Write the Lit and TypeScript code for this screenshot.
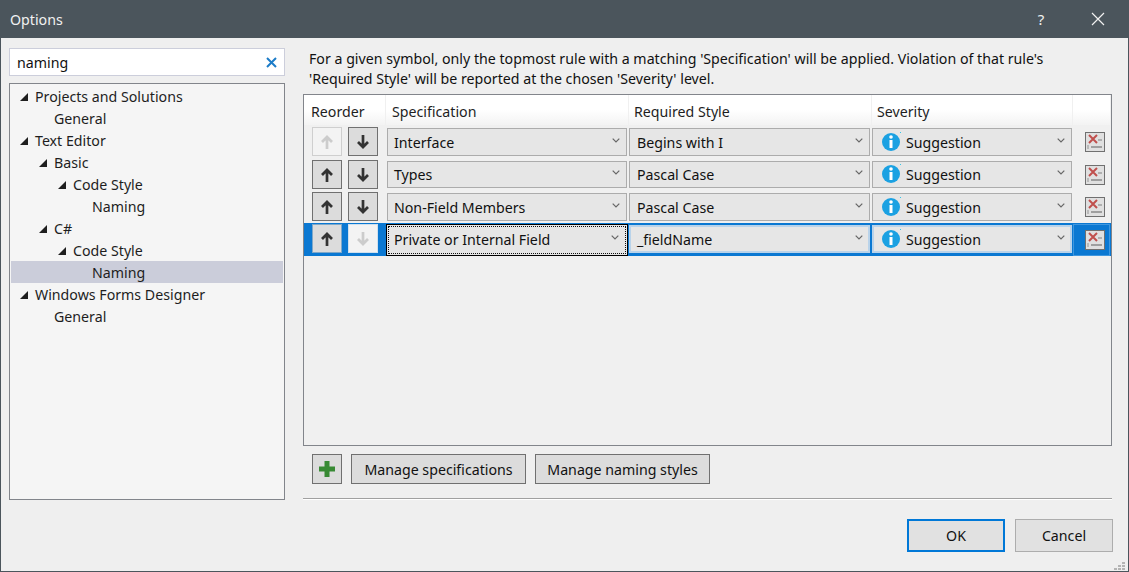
import { LitElement, html, css, svg } from 'lit';
import { customElement } from 'lit/decorators.js';

const tree = [
  { label: 'Projects and Solutions', level: 0, open: true },
  { label: 'General', level: 1 },
  { label: 'Text Editor', level: 0, open: true },
  { label: 'Basic', level: 1, open: true },
  { label: 'Code Style', level: 2, open: true },
  { label: 'Naming', level: 3 },
  { label: 'C#', level: 1, open: true },
  { label: 'Code Style', level: 2, open: true },
  { label: 'Naming', level: 3, selected: true },
  { label: 'Windows Forms Designer', level: 0, open: true },
  { label: 'General', level: 1 },
];

const rules = [
  { spec: 'Interface', style: 'Begins with I', upOff: true, rowClass: 'tall' },
  { spec: 'Types', style: 'Pascal Case', rowClass: 'short' },
  { spec: 'Non-Field Members', style: 'Pascal Case', rowClass: '' },
  { spec: 'Private or Internal Field', style: '_fieldName', downOff: true, rowClass: 'tall selected', selected: true },
];

const chevron = html`<svg class="chev" width="8" height="5" viewBox="0 0 8 5"><path d="M.7.7L4 4l3.300-3.300" fill="none" stroke="#666" stroke-width="1.200"/></svg>`;

const arrow = (up: boolean) => html`<svg width="14" height="16" viewBox="0 0 14 16">
  ${up
    ? svg`<path d="M7 15V3M2 8l5-5 5 5" fill="none" stroke="currentColor" stroke-width="2.700"/>`
    : svg`<path d="M7 1v12M2 8l5 5 5-5" fill="none" stroke="currentColor" stroke-width="2.700"/>`}
</svg>`;

const infoIcon = html`<svg class="info" width="22" height="22" viewBox="0 0 22 22">
  <circle cx="10" cy="11" r="9" fill="#1ba1e2"/>
  <circle cx="10" cy="6" r="1.800" fill="#fff"/>
  <rect x="8.500" y="9" width="3" height="8" fill="#fff"/>
  <rect x="19" y="1" width="1" height="1" fill="#35c6e8"/>
</svg>`;

const deleteIcon = html`<svg width="18" height="18" viewBox="0 0 18 18">
  <path d="M3 2l8 8M11 2l-8 8" fill="none" stroke="#c0504d" stroke-width="2"/>
  <path d="M12 7h4" stroke="#a0a0a0" stroke-width="1.500"/>
  <path d="M5 14h11" stroke="#8a8a8a" stroke-width="1.500"/>
  <path d="M2 12v4" stroke="#a0a0a0" stroke-width="1.200"/>
</svg>`;

@customElement('app-root')
export class AppRoot extends LitElement {
  static styles = css`
    :host {
      display: block;
      width: 1129px;
      height: 572px;
      font-family: 'Noto Sans', 'Open Sans', sans-serif;
      font-size: 14.2px;
      color: #1e1e1e;
    }
    .window {
      position: relative;
      box-sizing: border-box;
      height: 572px;
      display: flex;
      flex-direction: column;
      background: #efefef;
      border: 1px solid #4b555c;
      border-top: none;
    }
    .titlebar {
      height: 38px;
      flex: none;
      display: flex;
      align-items: center;
      background: #4b555c;
      color: #f1f1f1;
      padding-left: 9px;
    }
    .titlebar .name { flex: 1; }
    .help {
      width: 20px;
      margin-right: 40px;
      text-align: center;
      font-size: 15px;
    }
    .close { margin-right: 23px; display: flex; }
    .body {
      flex: 1;
      display: flex;
      padding: 10px 15px 0 8px;
      gap: 18px;
    }
    .side {
      width: 276px;
      flex: none;
      display: flex;
      flex-direction: column;
      gap: 7px;
    }
    .search {
      box-sizing: border-box;
      height: 28px;
      display: flex;
      align-items: center;
      padding: 0 7px;
      background: #fff;
      border: 1px solid #cccedb;
      color: #111;
    }
    .search span { flex: 1; }
    .search svg { display: block; }
    .tree {
      box-sizing: border-box;
      height: 417px;
      padding: 1px;
      background: #f5f5f5;
      border: 1px solid #82858b;
    }
    .node {
      height: 22px;
      display: flex;
      align-items: center;
    }
    .node.selected { background: #cbcdda; }
    .twist {
      width: 0;
      height: 0;
      margin: 2px 7px 0 1px;
      border-style: solid;
      border-width: 0 0 8px 8px;
      border-color: transparent transparent #1e1e1e transparent;
    }
    .spacer { width: 16px; flex: none; }
    .main {
      width: 809px;
      flex: none;
      display: flex;
      flex-direction: column;
    }
    .desc {
      height: 46px;
      padding: 1px 0 0 6px;
      box-sizing: border-box;
      line-height: 20px;
      color: #111;
      white-space: nowrap;
    }
    .table {
      box-sizing: border-box;
      height: 352px;
      background: #f0f0f0;
      border: 1px solid #82858b;
    }
    .row {
      display: grid;
      grid-template-columns: 82px 243px 243px 201px 38px;
      height: 32px;
    }
    .row.tall { height: 33px; }
    .head { height: 31px; }
    .head div {
      box-sizing: border-box;
      height: 30px;
      padding: 2px 0 0 5px;
      line-height: 30px;
      margin-right: 1px;
      background: linear-gradient(#ffffff 50%, #f3f3f3);
    }
    .head div.first { padding-left: 7px; }
    .head div.second { padding-left: 6px; }
    .row.selected { background: #0a78d2; }
    .movers {
      display: flex;
      gap: 6px;
      padding: 1px 0 0 8px;
    }
    .move {
      box-sizing: border-box;
      width: 30px;
      height: 29px;
      display: flex;
      align-items: center;
      justify-content: center;
      background: #dcdcdc;
      border: 1px solid #707070;
      color: #333;
    }
    .move.off {
      background: #f3f3f3;
      border-color: #cfcfcf;
      color: #cccccc;
    }
    .selected .move { border-color: #7fa8c9; }
    .selected .move.off { border-color: #cfe0ee; }
    .select {
      box-sizing: border-box;
      height: 28px;
      margin: 2px 2px 0 0;
      display: flex;
      align-items: center;
      padding: 0 6px 0 7px;
      background: #e6e6e6;
      border: 1px solid #acacac;
      color: #111;
    }
    .short .select { height: 27px; padding-bottom: 1px; }
    .select span { flex: 1; white-space: nowrap; }
    .select.spec { margin-left: 1px; padding-left: 6px; }
    .select.sev { margin-right: 1px; padding-left: 8px; }
    .selected .select { border: 2px solid #b9d3ea; padding-left: 6px; padding-right: 5px; }
    .selected .select.sev { padding-left: 7px; }
    .focus-cell {
      box-sizing: border-box;
      height: 32px;
      margin: 1px 1px 0 0;
      border: 1px solid #000;
      padding: 1px;
      background: #e6e6e6;
    }
    .selected .focus-cell .select {
      height: 28px;
      margin: 0;
      border: 1px dotted #111;
      padding: 0 6px 2px 5px;
    }
    .info { margin-right: 3px; flex: none; }
    .chev { flex: none; margin-bottom: 4px; }
    .remove {
      padding: 6px 0 0 12px;
    }
    .selected .remove {
      box-sizing: border-box;
      height: 32px;
      margin: 1px 1px 0 0;
      padding: 5px 0 0 11px;
      border: 1px solid #3f97df;
    }
    .remove div {
      box-sizing: border-box;
      width: 20px;
      height: 20px;
      display: flex;
      align-items: center;
      justify-content: center;
      background: #e0e0e0;
      border: 1px solid #707070;
    }
    .tools {
      display: flex;
      gap: 9px;
      margin-top: 8px;
      padding-left: 9px;
    }
    .btn {
      box-sizing: border-box;
      height: 30px;
      width: 175px;
      display: flex;
      align-items: center;
      justify-content: center;
      background: #dcdcdc;
      border: 1px solid #707070;
      color: #111;
    }
    .btn.add { width: 30px; }
    .rule {
      height: 1px;
      margin-top: 14px;
      background: #a0a0a0;
      box-shadow: 0 1px 0 #fff;
    }
    .footer {
      display: flex;
      justify-content: flex-end;
      gap: 10px;
      margin: 20px -1px 0 0;
    }
    .dlg {
      box-sizing: border-box;
      width: 98px;
      height: 33px;
      display: flex;
      align-items: center;
      justify-content: center;
      background: #e1e1e1;
      border: 1px solid #adadad;
      color: #111;
    }
    .dlg.default { border: 2px solid #0078d7; }
    .grip {
      position: absolute;
      right: 2px;
      bottom: 1px;
      display: block;
    }
  `;

  renderRow(r: (typeof rules)[number]) {
    const spec = html`<div class="select spec"><span>${r.spec}</span>${chevron}</div>`;
    return html`
      <div class="row ${r.rowClass}">
        <div class="movers">
          <div class="move ${r.upOff ? 'off' : ''}">${arrow(true)}</div>
          <div class="move ${r.downOff ? 'off' : ''}">${arrow(false)}</div>
        </div>
        ${r.selected ? html`<div class="focus-cell">${spec}</div>` : spec}
        <div class="select"><span>${r.style}</span>${chevron}</div>
        <div class="select sev">${infoIcon}<span>Suggestion</span>${chevron}</div>
        <div class="remove"><div>${deleteIcon}</div></div>
      </div>
    `;
  }

  render() {
    return html`
      <div class="window">
        <div class="titlebar">
          <span class="name">Options</span>
          <span class="help">?</span>
          <span class="close">
            <svg width="14" height="14" viewBox="0 0 14 14"><path d="M1 1l12 12M13 1L1 13" stroke="#f1f1f1" stroke-width="1.200" fill="none"/></svg>
          </span>
        </div>
        <div class="body">
          <div class="side">
            <div class="search">
              <span>naming</span>
              <svg width="11" height="11" viewBox="0 0 11 11"><path d="M1 1l9 9M10 1l-9 9" stroke="#1c7cc8" stroke-width="2" fill="none"/></svg>
            </div>
            <div class="tree">
              ${tree.map(
                (n) => html`
                  <div class="node ${n.selected ? 'selected' : ''}" style="padding-left:${8 + n.level * 19}px">
                    ${n.open ? html`<i class="twist"></i>` : html`<i class="spacer"></i>`}
                    <span>${n.label}</span>
                  </div>
                `
              )}
            </div>
          </div>
          <div class="main">
            <div class="desc">
              For a given symbol, only the topmost rule with a matching 'Specification' will be applied. Violation of that rule's<br />
              'Required Style' will be reported at the chosen 'Severity' level.
            </div>
            <div class="table">
              <div class="row head">
                <div class="first">Reorder</div>
                <div class="second">Specification</div>
                <div>Required Style</div>
                <div>Severity</div>
                <div></div>
              </div>
              ${rules.map((r) => this.renderRow(r))}
            </div>
            <div class="tools">
              <div class="btn add">
                <svg width="18" height="18" viewBox="0 0 18 18"><path d="M6.500 1h5v5.500H17v5h-5.500V17h-5v-5.500H1v-5h5.500z" fill="#388a34"/></svg>
              </div>
              <div class="btn">Manage specifications</div>
              <div class="btn">Manage naming styles</div>
            </div>
            <div class="rule"></div>
            <div class="footer">
              <div class="dlg default">OK</div>
              <div class="dlg">Cancel</div>
            </div>
          </div>
        </div>
        <svg class="grip" width="12" height="8" viewBox="0 0 12 8" fill="#b4b4b4">
          <rect x="8" y="0" width="3" height="2"/>
          <rect x="4" y="3" width="3" height="2"/><rect x="8" y="3" width="3" height="2"/>
          <rect x="0" y="6" width="3" height="2"/><rect x="4" y="6" width="3" height="2"/><rect x="8" y="6" width="3" height="2"/>
        </svg>
      </div>
    `;
  }
}
